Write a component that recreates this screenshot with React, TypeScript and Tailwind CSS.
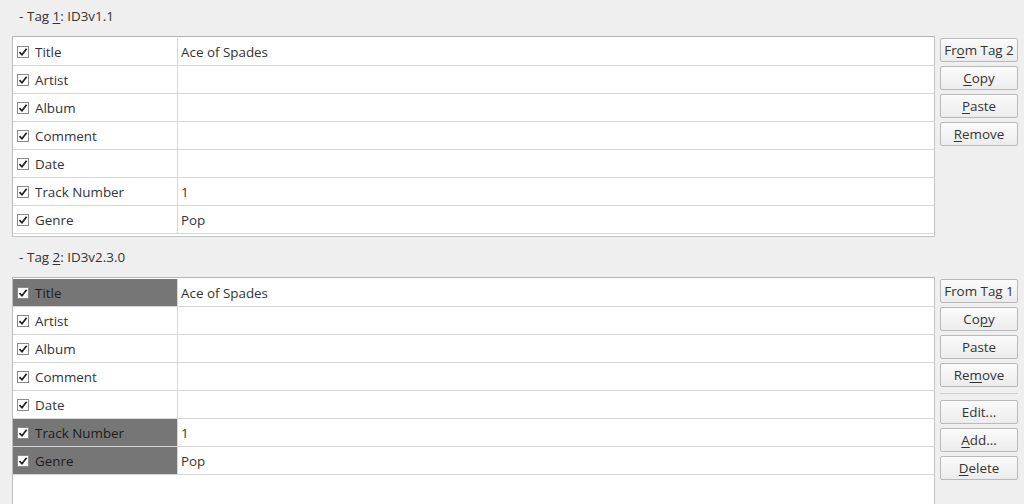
import React from "react";

type Row = { label: string; value: string; sel?: boolean };

const rows1: Row[] = [
  { label: "Title", value: "Ace of Spades" },
  { label: "Artist", value: "" },
  { label: "Album", value: "" },
  { label: "Comment", value: "" },
  { label: "Date", value: "" },
  { label: "Track Number", value: "1" },
  { label: "Genre", value: "Pop" },
];

const rows2: Row[] = [
  { label: "Title", value: "Ace of Spades", sel: true },
  { label: "Artist", value: "" },
  { label: "Album", value: "" },
  { label: "Comment", value: "" },
  { label: "Date", value: "" },
  { label: "Track Number", value: "1", sel: true },
  { label: "Genre", value: "Pop", sel: true },
];

function Check() {
  return (
    <span className="w-[12px] h-[12px] border border-[#8a8a8a] bg-white flex items-center justify-center shrink-0">
      <svg width="10" height="10" viewBox="0 0 10 10">
        <path d="M1.5 5.2 L4 7.8 L8.6 1.8" fill="none" stroke="#1e1e1e" strokeWidth="1.7" />
      </svg>
    </span>
  );
}

function TableRow({ r }: { r: Row }) {
  return (
    <div className="flex h-[28px] border-b border-[#d6d6d6]">
      <div
        className={
          "w-[165px] border-r border-[#d6d6d6] flex items-center pl-[4px] gap-[6px] " +
          (r.sel ? "bg-[#767676] text-[#1c1c1c]" : "text-[#333333]")
        }
      >
        <Check />
        <span>{r.label}</span>
      </div>
      <div className="flex-1 flex items-center pl-[3px] text-[#333333]">{r.value}</div>
    </div>
  );
}

function Btn({ children }: { children: React.ReactNode }) {
  return (
    <div className="h-[24px] w-[78px] border border-[#b9b9b9] rounded-[2px] bg-gradient-to-b from-[#fbfbfb] to-[#ececec] flex items-center justify-center text-[#333333]">
      {children}
    </div>
  );
}

function U({ children }: { children: React.ReactNode }) {
  return <span className="underline underline-offset-[2px]">{children}</span>;
}

export default function App() {
  return (
    <div
      className="w-[1024px] h-[504px] bg-[#efefef] overflow-hidden text-[13.4px] leading-[16px]"
      style={{ fontFamily: '"Open Sans", "Noto Sans", sans-serif' }}
    >
      {/* Section 1 */}
      <div className="h-[36px] pt-[8px] pl-[19px] flex items-start text-[#333333]">
        <span className="w-[8px]">-</span>
        <span>
          Tag <U>1</U>: ID3v1.1
        </span>
      </div>
      <div className="flex h-[201px]">
        <div className="ml-[12px] w-[923px] bg-white border border-[#c4c4c4] border-t-[#b4b4b4] border-l-[#bdbdbd] pt-[1px]">
          {rows1.map((r) => (
            <TableRow key={r.label} r={r} />
          ))}
        </div>
        <div className="ml-[5px] pt-[2px] flex flex-col gap-[4px]">
          <Btn>
            Fr<U>o</U>m Tag 2
          </Btn>
          <Btn>
            <U>C</U>opy
          </Btn>
          <Btn>
            <U>P</U>aste
          </Btn>
          <Btn>
            <U>R</U>emove
          </Btn>
        </div>
      </div>

      {/* Section 2 */}
      <div className="h-[40px] pt-[12px] pl-[19px] flex items-start text-[#333333]">
        <span className="w-[8px]">-</span>
        <span>
          Tag <U>2</U>: ID3v2.3.0
        </span>
      </div>
      <div className="flex h-[240px]">
        <div className="ml-[12px] w-[923px] bg-white border border-[#c4c4c4] border-t-[#b4b4b4] border-l-[#bdbdbd] pt-[1px]">
          {rows2.map((r) => (
            <TableRow key={r.label} r={r} />
          ))}
        </div>
        <div className="ml-[5px] pt-[2px] flex flex-col gap-[4px]">
          <Btn>From Tag 1</Btn>
          <Btn>
            Co<U>p</U>y
          </Btn>
          <Btn>Paste</Btn>
          <Btn>
            Re<U>m</U>ove
          </Btn>
          <div className="my-[2px] h-px bg-[#d0d0d0] w-[78px]" />
          <Btn>Edit...</Btn>
          <Btn>
            <U>A</U>dd...
          </Btn>
          <Btn>
            <U>D</U>elete
          </Btn>
        </div>
      </div>
    </div>
  );
}
